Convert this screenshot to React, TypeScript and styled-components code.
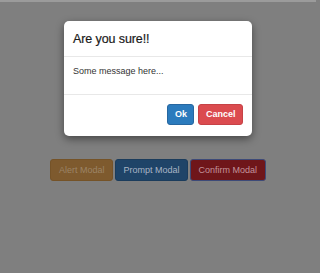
import React from "react";
import styled, { createGlobalStyle } from "styled-components";

const Global = createGlobalStyle`
  html, body { margin: 0; padding: 0; }
  body {
    background: #7f7f7f;
    font-family: "Liberation Sans", Arial, Helvetica, sans-serif;
    width: 320px;
    height: 273px;
    overflow: hidden;
  }
`;

const Page = styled.div`
  display: flex;
  flex-direction: column;
  align-items: center;
  width: 316px;
  height: 273px;
  border-top: 2px solid #9b9b9b;
  box-sizing: border-box;
`;

const Modal = styled.div`
  margin-top: 19px;
  width: 188px;
  background: #ffffff;
  border-radius: 5px;
  box-shadow: 0 3px 8px rgba(0, 0, 0, 0.45);
  display: flex;
  flex-direction: column;
`;

const Header = styled.div`
  height: 36px;
  box-sizing: border-box;
  padding: 0 9px;
  display: flex;
  align-items: center;
  border-bottom: 1px solid #e8e8e8;
`;

const Title = styled.h4`
  margin: 0;
  font-size: 12.5px;
  font-weight: 500;
  color: #1a1a1a;
  letter-spacing: -0.1px;
  -webkit-text-stroke: 0.2px #1a1a1a;
`;

const Body = styled.div`
  height: 38px;
  box-sizing: border-box;
  padding: 9px 9px 0;
  font-size: 9px;
  color: #333;
  border-bottom: 1px solid #e8e8e8;
`;

const Footer = styled.div`
  height: 41px;
  box-sizing: border-box;
  padding: 9px 9px 0;
  display: flex;
  justify-content: flex-end;
  gap: 4px;
`;

const ModalButton = styled.button<{ $bg: string; $border: string }>`
  height: 21px;
  padding: 0 6.5px;
  border: 1px solid ${(p) => p.$border};
  border-radius: 3px;
  background: ${(p) => p.$bg};
  color: #fff;
  font-family: "Liberation Sans", Arial, sans-serif;
  font-weight: bold;
  font-size: 9px;
  line-height: 19px;
`;

const Row = styled.div`
  margin-top: 23px;
  display: flex;
  gap: 2px;
`;

const DimButton = styled.button<{ $bg: string; $fg: string; $border: string }>`
  height: 22px;
  padding: 0 7.5px;
  border: 1px solid ${(p) => p.$border};
  border-radius: 3px;
  background: ${(p) => p.$bg};
  color: ${(p) => p.$fg};
  font-family: "Liberation Sans", Arial, sans-serif;
  font-size: 9px;
  line-height: 20px;
`;

export default function App() {
  return (
    <>
      <Global />
      <Page>
        <Modal>
          <Header>
            <Title>Are you sure!!</Title>
          </Header>
          <Body>Some message here...</Body>
          <Footer>
            <ModalButton $bg="#2b7bbd" $border="#2767a0">Ok</ModalButton>
            <ModalButton $bg="#db4b4f" $border="#c64246">Cancel</ModalButton>
          </Footer>
        </Modal>
        <Row>
          <DimButton $bg="#7e5a2e" $fg="#9c8466" $border="#755328">Alert Modal</DimButton>
          <DimButton $bg="#1f4468" $fg="#a9b5c5" $border="#1b3c5c">Prompt Modal</DimButton>
          <DimButton $bg="#6f161a" $fg="#c3939b" $border="#3d4a78">Confirm Modal</DimButton>
        </Row>
      </Page>
    </>
  );
}
